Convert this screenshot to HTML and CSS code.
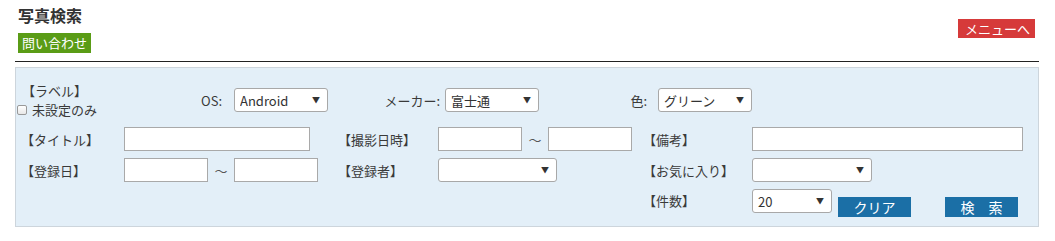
FILE: index.html
```html
<!DOCTYPE html>
<html lang="ja">
<head>
    <meta charset="UTF-8">
    <meta name="viewport" content="width=device-width, initial-scale=1.0">
    <title>写真検索</title>
    <link rel="stylesheet" href="styles.css">
</head>
<body>
    <div class="page">
        <div class="head">
            <div class="head-left">
                <h1 class="title">写真検索</h1>
                <a class="btn-contact" href="#">問い合わせ</a>
            </div>
            <a class="btn-menu" href="#">メニューへ</a>
        </div>
        <div class="rule"></div>

        <form class="panel">
            <div class="row-top">
                <div class="label-block">
                    <div class="lb-title">【ラベル】</div>
                    <label class="check"><input type="checkbox">未設定のみ</label>
                </div>
                <div class="field f-os">
                    <span class="cap">OS:</span>
                    <span class="sel w94"><select><option>Android</option></select></span>
                </div>
                <div class="field f-maker">
                    <span class="cap">メーカー:</span>
                    <span class="sel w94"><select><option>富士通</option></select></span>
                </div>
                <div class="field f-color">
                    <span class="cap">色:</span>
                    <span class="sel w94"><select><option>グリーン</option></select></span>
                </div>
            </div>

            <div class="grid">
                <!-- row 2 -->
                <div class="lbl">【タイトル】</div>
                <div class="cell"><input class="txt w186" type="text"></div>
                <div class="lbl">【撮影日時】</div>
                <div class="cell range">
                    <input class="txt w84" type="text"><span class="tilde">～</span><input class="txt w84" type="text">
                </div>
                <div class="lbl">【備考】</div>
                <div class="cell"><input class="txt w271" type="text"></div>

                <!-- row 3 -->
                <div class="lbl">【登録日】</div>
                <div class="cell range">
                    <input class="txt w84" type="text"><span class="tilde">～</span><input class="txt w84" type="text">
                </div>
                <div class="lbl">【登録者】</div>
                <div class="cell"><span class="sel w119"><select><option></option></select></span></div>
                <div class="lbl">【お気に入り】</div>
                <div class="cell"><span class="sel w120"><select><option></option></select></span></div>

                <!-- row 4 -->
                <div class="lbl empty"></div>
                <div class="cell"></div>
                <div class="lbl empty"></div>
                <div class="cell"></div>
                <div class="lbl top">【件数】</div>
                <div class="cell actions">
                    <span class="sel w80"><select><option>20</option></select></span>
                    <button class="btn-blue btn-clear" type="button">クリア</button>
                    <button class="btn-blue btn-search" type="button">検　索</button>
                </div>
            </div>
        </form>
    </div>
</body>
</html>
```

FILE: styles.css
```css
* {
    box-sizing: border-box;
}
body {
    margin: 0;
    font-family: "Noto Sans CJK JP", "Noto Sans", sans-serif;
    font-size: 13px;
    color: #3a3a3a;
    background-color: #fff;
}
.page {
    padding: 0 16px 0 15px;
}
.head {
    display: flex;
    justify-content: space-between;
    align-items: flex-start;
    padding: 5px 4px 0 3px;
}
.title {
    margin: 0;
    font-size: 16px;
    line-height: 20px;
    font-weight: bold;
    color: #333;
}
.btn-contact {
    display: inline-block;
    margin-top: 8px;
    height: 20px;
    line-height: 20px;
    padding: 0 4px;
    background-color: #5a9c16;
    color: #fff;
    text-decoration: none;
}
.btn-menu {
    display: inline-block;
    margin-top: 14px;
    height: 19px;
    line-height: 19px;
    padding: 0 5px 0 7px;
    background-color: #d63a3a;
    color: #fff;
    text-decoration: none;
}
.rule {
    margin-top: 8px;
    border-top: 1px solid #222;
}
.panel {
    margin: 5px 0 0;
    background-color: #e3eff8;
    border: 1px solid #cdd5dc;
    padding: 13px 0 9px 2px;
}
.row-top {
    display: flex;
    align-items: center;
    height: 38px;
    margin-bottom: 8px;
}
.label-block {
    width: 172px;
    line-height: 19px;
}
.lb-title {
    padding-left: 4px;
}
.check {
    display: flex;
    align-items: center;
    margin-left: -1px;
}
.check input {
    appearance: none;
    width: 10px;
    height: 10px;
    margin: 0 5px 0 0;
    border: 1px solid #999;
    border-radius: 2px;
    background: linear-gradient(#fff, #e8e8e8);
}
.field {
    display: flex;
    align-items: center;
}
.cap {
    text-align: right;
}
.f-os .cap {
    width: 32px;
    margin-right: 12px;
}
.f-maker .cap {
    width: 112px;
    margin-right: 5px;
}
.f-color .cap {
    width: 108px;
    margin-right: 11px;
}
.sel {
    position: relative;
    display: inline-block;
}
.sel select {
    appearance: none;
    width: 100%;
    height: 24px;
    border: 1px solid #a8a8a8;
    border-radius: 3px;
    background-color: #fff;
    padding: 0 18px 0 5px;
    font: inherit;
    color: #333;
}
.sel::after {
    content: "▼";
    position: absolute;
    right: 8px;
    top: 6px;
    font-size: 8px;
    line-height: 12px;
    color: #333;
    pointer-events: none;
}
.w80 { width: 80px; }
.w94 { width: 94px; }
.w119 { width: 119px; }
.w120 { width: 120px; }
.grid {
    display: grid;
    grid-template-columns: 106px 211px 103px 202px 112px 1fr;
    grid-template-rows: 24px 24px 28px;
    row-gap: 7px;
}
.lbl {
    display: flex;
    align-items: center;
    padding-left: 3px;
}
.lbl.top {
    align-items: flex-start;
    line-height: 24px;
}
.cell {
    display: flex;
    align-items: center;
}
.txt {
    height: 24px;
    border: 1px solid #a9a9a9;
    background-color: #fff;
    padding: 0 4px;
    font: inherit;
    color: #333;
}
.w84 { width: 84px; }
.w186 { width: 186px; }
.w271 { width: 271px; }
.tilde {
    width: 26px;
    text-align: center;
    color: #555;
}
.actions {
    align-items: flex-start;
}
.btn-blue {
    margin-top: 8px;
    width: 73px;
    height: 20px;
    padding: 0;
    border: none;
    background-color: #1b6fa6;
    color: #fff;
    font-family: inherit;
    font-size: 14px;
    line-height: 20px;
    cursor: pointer;
}
.btn-clear {
    margin-left: 6px;
}
.btn-search {
    margin-left: 34px;
}
```
